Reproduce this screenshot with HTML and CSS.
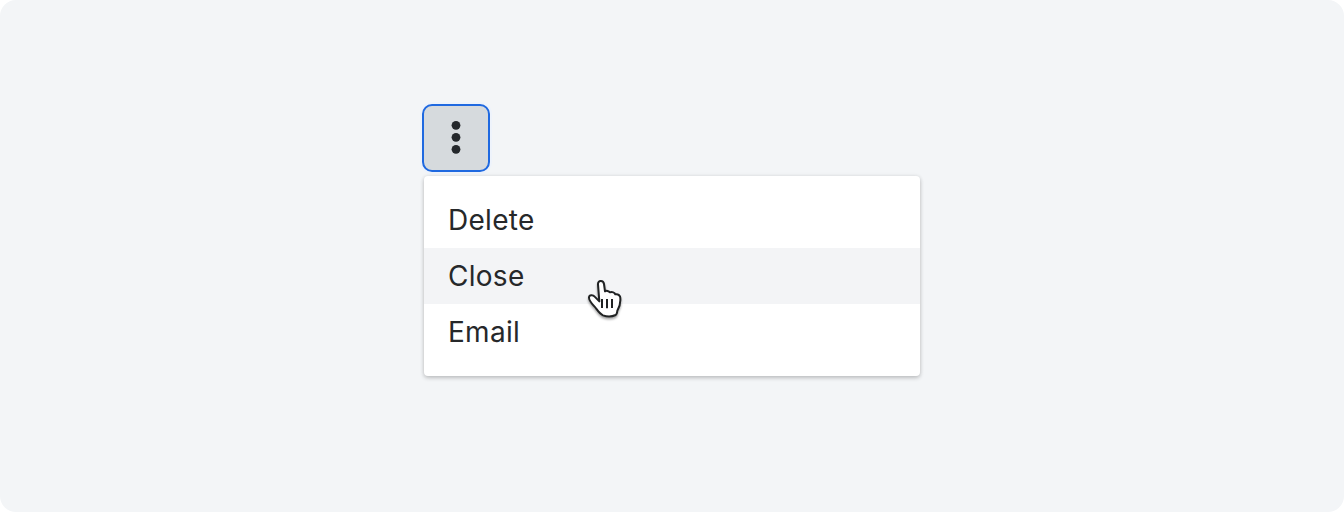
FILE: index.html
```html
<!DOCTYPE html>
<html lang="en">
<head>
<meta charset="utf-8">
<title>Action menu</title>
<link rel="stylesheet" href="styles.css">
</head>
<body>
<main class="stage">
  <div class="dropdown">
    <button class="trigger" aria-label="More actions" aria-expanded="true">
      <svg class="dots" width="10" height="34" viewBox="0 0 10 34"><circle cx="5" cy="5.3" r="4.4"/><circle cx="5" cy="17.3" r="4.4"/><circle cx="5" cy="29.3" r="4.4"/></svg>
    </button>
    <ul class="menu">
      <li class="item">Delete</li>
      <li class="item item-active">Close</li>
      <li class="item">Email</li>
    </ul>
    <svg class="pointer" width="50" height="52" viewBox="0 0 150 156">
      <path d="M27 76 C28 68 39 68 44 74 L58 88 L54 37 C53 24 70 23 72 36 L75 58 C79 55 87 57 90 61 C96 59 104 61 106 67 C114 65 122 71 121 80 C122 95 118 106 112 116 C111 121 112 125 107 129 C96 134 80 134 69 130 C60 126 54 117 48 109 C43 101 26 89 27 76Z"/>
      <path d="M66 81V108M81 81V109M96 81V108"/>
    </svg>
  </div>
</main>
</body>
</html>
```

FILE: styles.css
```css
* { box-sizing: border-box; }
body { margin: 0; background: #fff; font-family: Inter, "Liberation Sans", sans-serif; }
.stage { width: 1344px; height: 512px; padding: 104px 422px; background: #f3f5f7; border-radius: 16px; }
.dropdown { position: relative; }
.trigger { display: flex; align-items: center; justify-content: center; width: 68px; height: 68px; padding: 0 0 2px; border: 2px solid #1f69e0; border-radius: 10px; background: #d6dadd; box-shadow: 0 0 0 2px #eef3fb; }
.dots { fill: #24282b; }
.menu { width: 496px; margin: 4px 2px 0; padding: 16px 0; list-style: none; background: #fff; border-radius: 4px; box-shadow: 0 0 4px rgba(0,0,0,.08), 0 2px 4px rgba(0,0,0,.2); }
.item { height: 56px; padding: 0 24px; font-size: 28px; font-weight: 380; letter-spacing: .28px; line-height: 56px; color: #26282a; }
.item-active { background: #f3f4f6; }
.pointer { position: absolute; left: 158px; top: 168px; fill: #fff; stroke: #202223; stroke-width: 6; stroke-linejoin: round; filter: drop-shadow(0 2px 1px rgba(0,0,0,.35)); }
```
